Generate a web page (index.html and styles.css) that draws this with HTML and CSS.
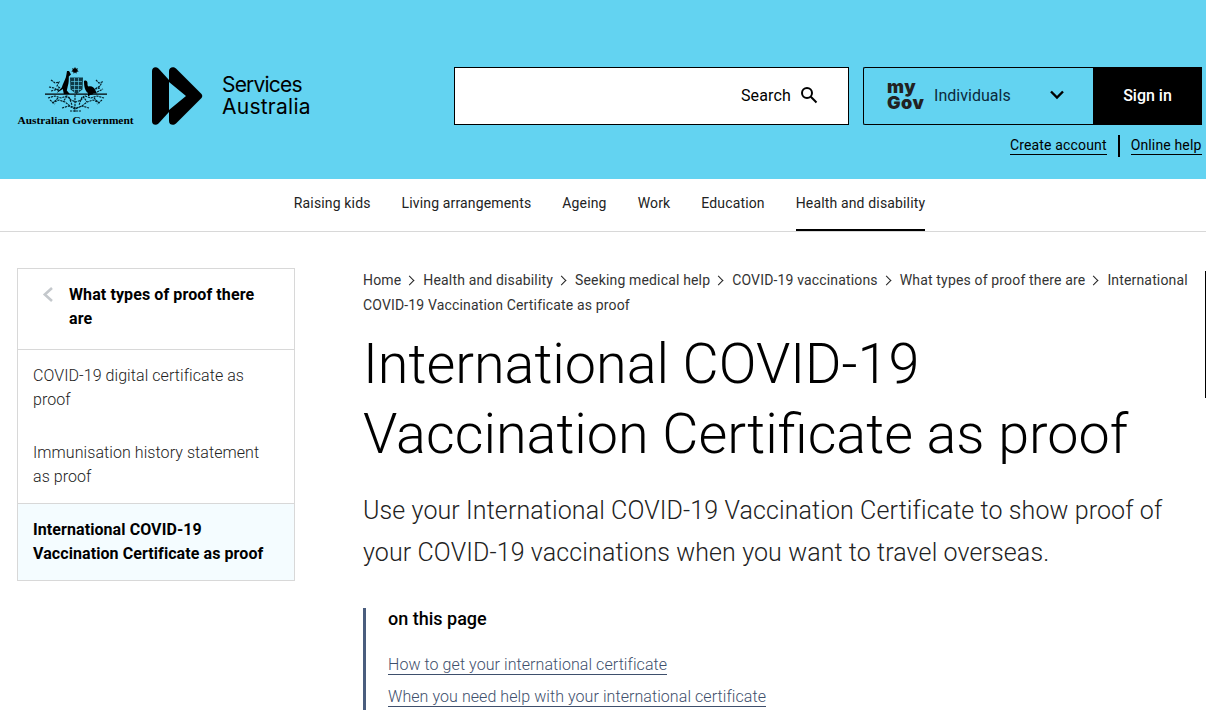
FILE: index.html
```html
<!DOCTYPE html>
<html lang="en">
<head>
<meta charset="utf-8">
<title>International COVID-19 Vaccination Certificate as proof</title>
<link rel="stylesheet" href="styles.css">
</head>
<body>
<header class="masthead">
  <div class="brand">
    <a class="gov-logo" href="#">
      <svg class="crest" width="62" height="46" viewBox="0 0 62 46" aria-hidden="true">
        <path class="ink" d="M30 0l1 1.800 2-.5-.8 1.800 1.500 1.300-2 .3-.4 2-1.300-1.500-1.300 1.500-.4-2-2-.3 1.500-1.300-.8-1.800 2 .5z"/>
        <path class="ink" d="M24 4l2 3.500-2.200 2c0 3.500 0 6.500-1 9.500l-1 4.500 3 3.500h-6l-1-5-6 4 1-1.500 4-4c1-4 3-7 4-10 .5-2 .8-4 1.200-6.500z"/>
        <path class="ink" d="M39 14c2-1 3.500 0 3.500 2 0 2 0 3 1 3.500 3-1 6 1 7 4l1.500 3-3.500 0c-1 1-2 1.500-4 1.500v1h-1.500v-3c-3-2-4-6.500-4-12z"/>
        <path class="shield" d="M25 10.500h13l-.5 12-6 4.500-6-4.500z"/>
        <path class="shield-lines" d="M26 14.500h11M26 18.500h11M27 22.500h9M29.500 11v14M33.500 11v14"/>
        <path class="ink" d="M0 26.600h62v1.200H0z"/>
        <path class="leaf" d="M6 13l4 3 4-1-2 4 3 2M4 20l5 1 5 3M6 24l8-2M51 13l3 3 3-1-2 4-5 3M50 22l5-1M52 25l6-3M3 31l7-2 6 2 6-2 4 4 5 2 5-2 4-4 6 2 6-2 7 2M7 36l7-3 6 2 5 4 6 2 6-2 5-4 6-2 7 3M17 41l7-2 6 3 7-3 7 2M30 28v17M25 44h11M22 29l-4 6M38 29l4 6M13 31l-4 4M49 31l4 4M5 33l5 4M57 33l-5 4M24 30l3 8M37 30l-3 8"/>
      </svg>
      <span class="gov-name">Australian Government</span>
    </a>
    <a class="sa-logo" href="#">
      <svg width="52" height="58" viewBox="0 0 52 58" aria-hidden="true">
        <path class="ink" d="M0 4C0 0 4-1 6.500 1.500L17 13v32L6.500 56.500C4 59 0 58 0 54z"/>
        <path class="ink" d="M17 4c0-4 4.500-5 7-2.500L49.500 27c1 1.200 1 2.800 0 4L24 56.500c-2.500 2.500-7 1.500-7-2.500V43l17-14-17-14z"/>
      </svg>
      <span class="sa-name"><span class="sa-top">Services</span><br><span class="sa-bottom">Australia</span></span>
    </a>
  </div>
  <form class="search">
    <span class="search-label">Search</span>
    <svg width="18" height="18" viewBox="0 0 18 18" aria-hidden="true"><circle class="stroke" cx="7" cy="7" r="5"/><path class="stroke" d="M10.800 10.800l5.700 5.700"/></svg>
  </form>
  <div class="account">
    <div class="account-bar">
      <div class="mygov-select">
        <span class="mygov-mark">my<br>Gov</span>
        <span class="mygov-role">Individuals</span>
        <svg class="chev" width="16" height="10" viewBox="0 0 16 10" aria-hidden="true"><path class="stroke-heavy" d="M2 1.500l6 6 6-6"/></svg>
      </div>
      <a class="signin" href="#">Sign in</a>
    </div>
    <div class="account-links">
      <a href="#">Create account</a>
      <span class="divider"></span>
      <a href="#">Online help</a>
    </div>
  </div>
</header>

<nav class="topnav">
  <a href="#">Raising kids</a>
  <a href="#">Living arrangements</a>
  <a href="#">Ageing</a>
  <a href="#">Work</a>
  <a href="#">Education</a>
  <a href="#" class="active">Health and disability</a>
</nav>

<div class="layout">
  <aside class="sidenav">
    <a class="side-parent" href="#">
      <svg width="12" height="15" viewBox="0 0 12 15" aria-hidden="true"><path class="back" d="M10 1L2.800 7.500 10 14"/></svg>
      <span>What types of proof there are</span>
    </a>
    <div class="side-list">
      <a href="#">COVID-19 digital certificate as proof</a>
      <a href="#">Immunisation history statement as proof</a>
    </div>
    <a class="side-current" href="#">International COVID-19 Vaccination Certificate as proof</a>
  </aside>

  <main class="content">
    <div class="crumbs">
      <a href="#">Home</a><span class="sep"></span><a href="#">Health and disability</a><span class="sep"></span><a href="#">Seeking medical help</a><span class="sep"></span><a href="#">COVID-19 vaccinations</a><span class="sep"></span><a href="#">What types of proof there are</a><span class="sep"></span><a href="#">International</a> <a href="#">COVID-19 Vaccination Certificate as proof</a>
    </div>
    <h1>International COVID-19 Vaccination Certificate as proof</h1>
    <p class="lead">Use your International COVID-19 Vaccination Certificate to show proof of your COVID-19 vaccinations when you want to travel overseas.</p>
    <section class="onpage">
      <h2>on this page</h2>
      <a href="#">How to get your international certificate</a>
      <a href="#">When you need help with your international certificate</a>
    </section>
  </main>
</div>
<div class="edge-line"></div>
</body>
</html>
```
FILE: styles.css
```css
* { box-sizing: border-box; }
html, body { margin: 0; height: 725px; overflow: hidden; }
body { font-family: Roboto, "Liberation Sans", sans-serif; color: #000; background: #fff; position: relative; }
a { color: inherit; }
.ink { fill: #000; }
.shield { fill: #0d3a47; }
.shield-lines { fill: none; stroke: #63d3f1; stroke-width: .9; opacity: .7; }
.leaf { fill: none; stroke: #04202a; stroke-width: 1.150; stroke-dasharray: 2.200 .8; }
.stroke { fill: none; stroke: #000; stroke-width: 2; }
.stroke-heavy { fill: none; stroke: #000; stroke-width: 2.400; }
.back { fill: none; stroke: #c4c8cc; stroke-width: 2.600; }

.masthead { height: 179px; background: #63d3f1; display: flex; align-items: flex-start; padding: 67px 4px 0 17px; }
.brand { width: 437px; display: flex; align-items: flex-start; }
.gov-logo { width: 117px; display: flex; flex-direction: column; align-items: center; text-decoration: none; }
.crest { display: block; }
.gov-name { font: bold 11.400px/12px "Liberation Serif", serif; white-space: nowrap; margin-top: 1px; }
.sa-logo { margin-left: 18px; display: flex; align-items: center; text-decoration: none; }
.sa-name { margin-left: 18px; font: 400 21px/22px Inter, "Noto Sans", sans-serif; color: #000; }
.sa-top { letter-spacing: -.8px; }
.sa-bottom { letter-spacing: .25px; }

.search { width: 395px; height: 58px; background: #fff; border: 1px solid #000; display: flex; align-items: center; justify-content: flex-end; padding: 0 30px 2px 0; gap: 9px; }
.search-label { font-size: 16px; letter-spacing: .15px; }

.account { margin-left: 14px; width: 339px; }
.account-bar { display: flex; height: 58px; }
.mygov-select { width: 230px; border: 1px solid #000; border-right: 0; border-radius: 2px 0 0 2px; display: flex; align-items: center; padding: 0 0 2px 23px; position: relative; }
.mygov-mark { font: 900 18px/16px Inter, Roboto, sans-serif; color: #222; width: 47px; letter-spacing: .5px; }
.mygov-role { font-size: 16px; color: #0b2a3c; letter-spacing: .03px; }
.chev { position: absolute; left: 185px; top: 22px; }
.signin { width: 109px; background: #000; color: #fff; font-size: 16px; font-weight: 500; display: flex; align-items: center; justify-content: center; text-decoration: none; padding-bottom: 2px; }
.account-links { display: flex; justify-content: flex-end; align-items: center; margin: 10px .5px 0 0; font-size: 14px; letter-spacing: .15px; }
.account-links a { text-decoration: none; border-bottom: 1px solid #000; line-height: 17px; }
.divider { width: 2px; height: 22px; background: #000; margin: 0 11px; }

.topnav { height: 53px; border-bottom: 1px solid #d8d8d8; display: flex; justify-content: center; gap: 31px; padding-left: 13px; font-size: 14px; letter-spacing: .15px; }
.topnav a { text-decoration: none; line-height: 48px; color: #222; height: 52px; }
.topnav .active { border-bottom: 2px solid #000; }

.layout { display: flex; align-items: flex-start; padding: 36px 0 0 17px; }
.sidenav { width: 278px; border: 1px solid #d8d8d8; flex: none; }
.side-parent { display: flex; padding: 14px 30px 18px 24px; font-size: 16px; line-height: 24px; font-weight: 700; text-decoration: none; border-bottom: 1px solid #d8d8d8; gap: 15px; letter-spacing: .1px; }
.side-parent svg { flex: none; margin-top: 4px; }
.side-list { padding: 14px 30px 14px 15px; font-size: 16px; line-height: 24px; font-weight: 300; letter-spacing: .07px; }
.side-list a { display: block; text-decoration: none; color: #222; }
.side-list a + a { margin-top: 29px; }
.side-current { display: block; padding: 14px 15px; background: #f4fcff; border-top: 1px solid #d8d8d8; font-size: 16px; line-height: 24px; font-weight: 700; text-decoration: none; letter-spacing: .08px; }

.content { margin-left: 68px; width: 830px; }
.crumbs { font-size: 14px; line-height: 25px; color: #333; letter-spacing: .16px; }
.crumbs a { text-decoration: none; }
.sep { display: inline-block; width: 7px; height: 7px; border-top: 1.500px solid #222; border-right: 1.500px solid #222; transform: rotate(45deg); margin: 0 10px 1px 5px; }
h1 { margin: 11px 0 0; font-size: 55.700px; line-height: 70px; font-weight: 300; }
.lead { margin: 21px 0 0; font-size: 25px; line-height: 42px; font-weight: 300; color: #222; letter-spacing: .11px; }
.onpage { margin-top: 34px; border-left: 3px solid #4a5d7e; padding-left: 22px; height: 102px; }
.onpage h2 { margin: 0; font-size: 18px; line-height: 22px; font-weight: 500; }
.onpage a { display: table; font-size: 16px; line-height: 19px; font-weight: 300; color: #3e4f6c; text-decoration: none; border-bottom: 1px solid #3e4f6c; margin-top: 12px; letter-spacing: .07px; }
.onpage h2 + a { margin-top: 25px; }

.edge-line { position: absolute; right: 0; top: 271px; width: 1px; height: 127px; background: #000; }
```
